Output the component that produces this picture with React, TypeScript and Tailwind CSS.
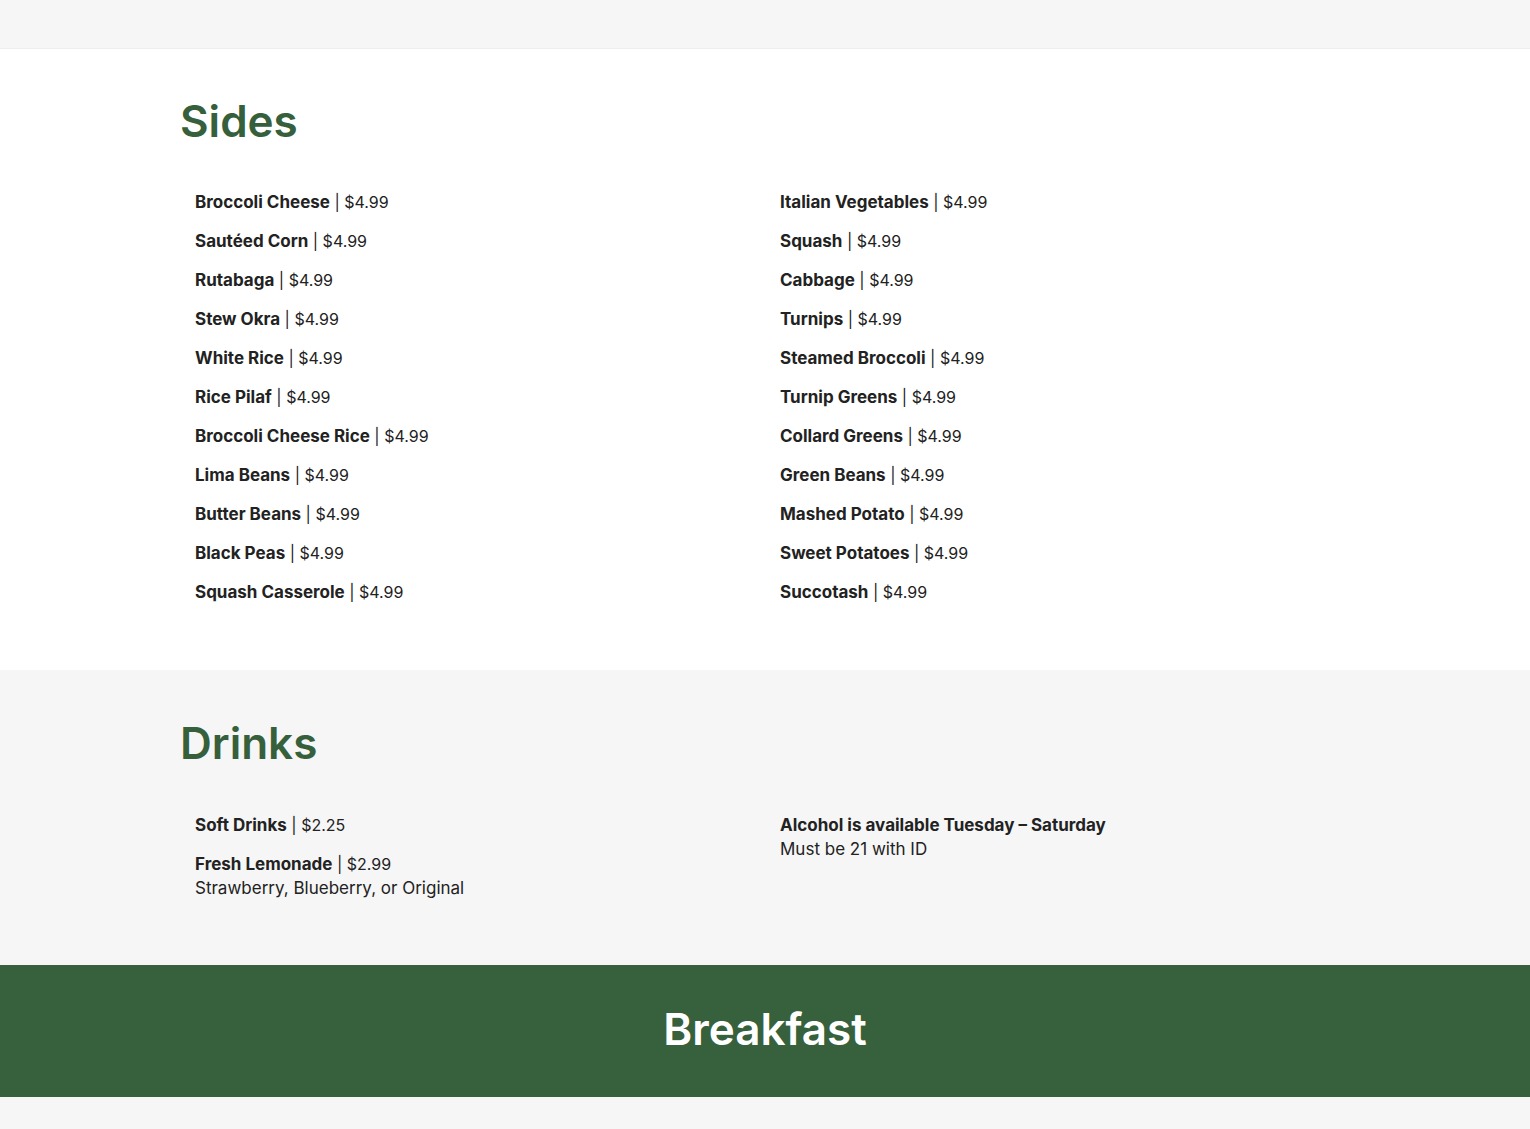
import React from "react";

const font = { fontFamily: "Inter, 'Open Sans', sans-serif" };

const left: [string, string][] = [
  ["Broccoli Cheese", "$4.99"],
  ["Sautéed Corn", "$4.99"],
  ["Rutabaga", "$4.99"],
  ["Stew Okra", "$4.99"],
  ["White Rice", "$4.99"],
  ["Rice Pilaf", "$4.99"],
  ["Broccoli Cheese Rice", "$4.99"],
  ["Lima Beans", "$4.99"],
  ["Butter Beans", "$4.99"],
  ["Black Peas", "$4.99"],
  ["Squash Casserole", "$4.99"],
];
const right: [string, string][] = [
  ["Italian Vegetables", "$4.99"],
  ["Squash", "$4.99"],
  ["Cabbage", "$4.99"],
  ["Turnips", "$4.99"],
  ["Steamed Broccoli", "$4.99"],
  ["Turnip Greens", "$4.99"],
  ["Collard Greens", "$4.99"],
  ["Green Beans", "$4.99"],
  ["Mashed Potato", "$4.99"],
  ["Sweet Potatoes", "$4.99"],
  ["Succotash", "$4.99"],
];

function Item({ name, price, desc }: { name: string; price?: string; desc?: string }) {
  return (
    <div className="mb-[15px] text-[17px] leading-[24px] text-[#222]">
      <div>
        <span className="font-bold">{name}</span>
        {price && <span className="font-normal text-[16px]"> | {price}</span>}
      </div>
      {desc && <div className="font-normal">{desc}</div>}
    </div>
  );
}

export default function App() {
  return (
    <div style={font} className="w-[1530px] min-h-[1129px] bg-[#f6f6f6]">
      <div className="h-[48px] bg-[#f6f6f6] shadow-[0_1px_0_#eeeeee] relative" />
      <section className="bg-white pt-[47px] pb-[51px]">
        <div className="w-[1170px] mx-auto">
          <h2 className="text-[44px] leading-[53px] font-semibold text-[#36603c]">Sides</h2>
          <div className="grid grid-cols-2 mt-[42px]">
            <div className="px-[15px]">
              {left.map(([n, p]) => (
                <Item key={n} name={n} price={p} />
              ))}
            </div>
            <div className="px-[15px]">
              {right.map(([n, p]) => (
                <Item key={n} name={n} price={p} />
              ))}
            </div>
          </div>
        </div>
      </section>
      <section className="bg-[#f6f6f6] pt-[47px] pb-[50px]">
        <div className="w-[1170px] mx-auto">
          <h2 className="text-[44px] leading-[53px] font-semibold text-[#36603c]">Drinks</h2>
          <div className="grid grid-cols-2 mt-[43px]">
            <div className="px-[15px]">
              <Item name="Soft Drinks" price="$2.25" />
              <Item name="Fresh Lemonade" price="$2.99" desc="Strawberry, Blueberry, or Original" />
            </div>
            <div className="px-[15px]">
              <Item name="Alcohol is available Tuesday – Saturday" desc="Must be 21 with ID" />
            </div>
          </div>
        </div>
      </section>
      <section className="bg-[#37603c] h-[132px] flex items-center justify-center pb-[3px]">
        <h2 className="text-[44px] leading-[53px] font-semibold text-white">Breakfast</h2>
      </section>
      <div className="h-[32px] bg-[#f6f6f6]" />
    </div>
  );
}
